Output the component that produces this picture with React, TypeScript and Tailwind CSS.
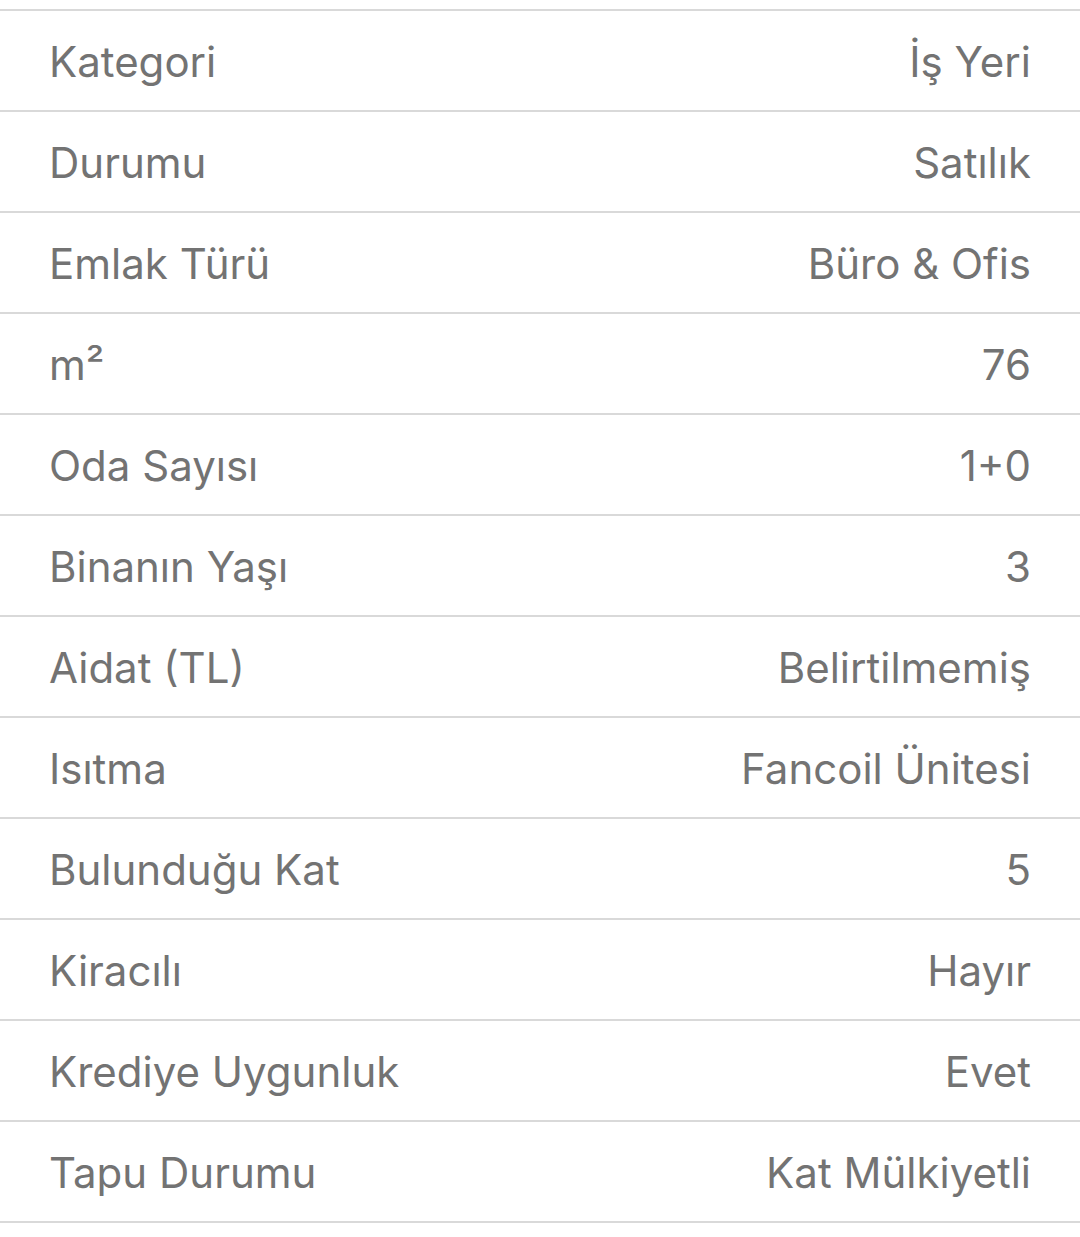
import React from "react";

const rows: [string, React.ReactNode][] = [
  ["Kategori", "İş Yeri"],
  ["Durumu", "Satılık"],
  ["Emlak Türü", "Büro & Ofis"],
  ["m²", "76"],
  ["Oda Sayısı", "1+0"],
  ["Binanın Yaşı", "3"],
  ["Aidat (TL)", "Belirtilmemiş"],
  ["Isıtma", "Fancoil Ünitesi"],
  ["Bulunduğu Kat", "5"],
  ["Kiracılı", "Hayır"],
  ["Krediye Uygunluk", "Evet"],
  ["Tapu Durumu", "Kat Mülkiyetli"],
];

export default function App() {
  return (
    <div className="w-[1080px] h-[1237px] bg-white pt-[9px]" style={{ fontFamily: "Inter, 'Noto Sans', sans-serif" }}>
      <div className="border-t-2 border-[#d9d9d9]">
        {rows.map(([k, v], i) => (
          <div key={i} className="flex h-[101px] items-center justify-between border-b-2 border-[#d9d9d9] px-[49px] pt-[2px] text-[42px] leading-none text-[#737373]">
            <span>{k}</span>
            <span>{v}</span>
          </div>
        ))}
      </div>
    </div>
  );
}
